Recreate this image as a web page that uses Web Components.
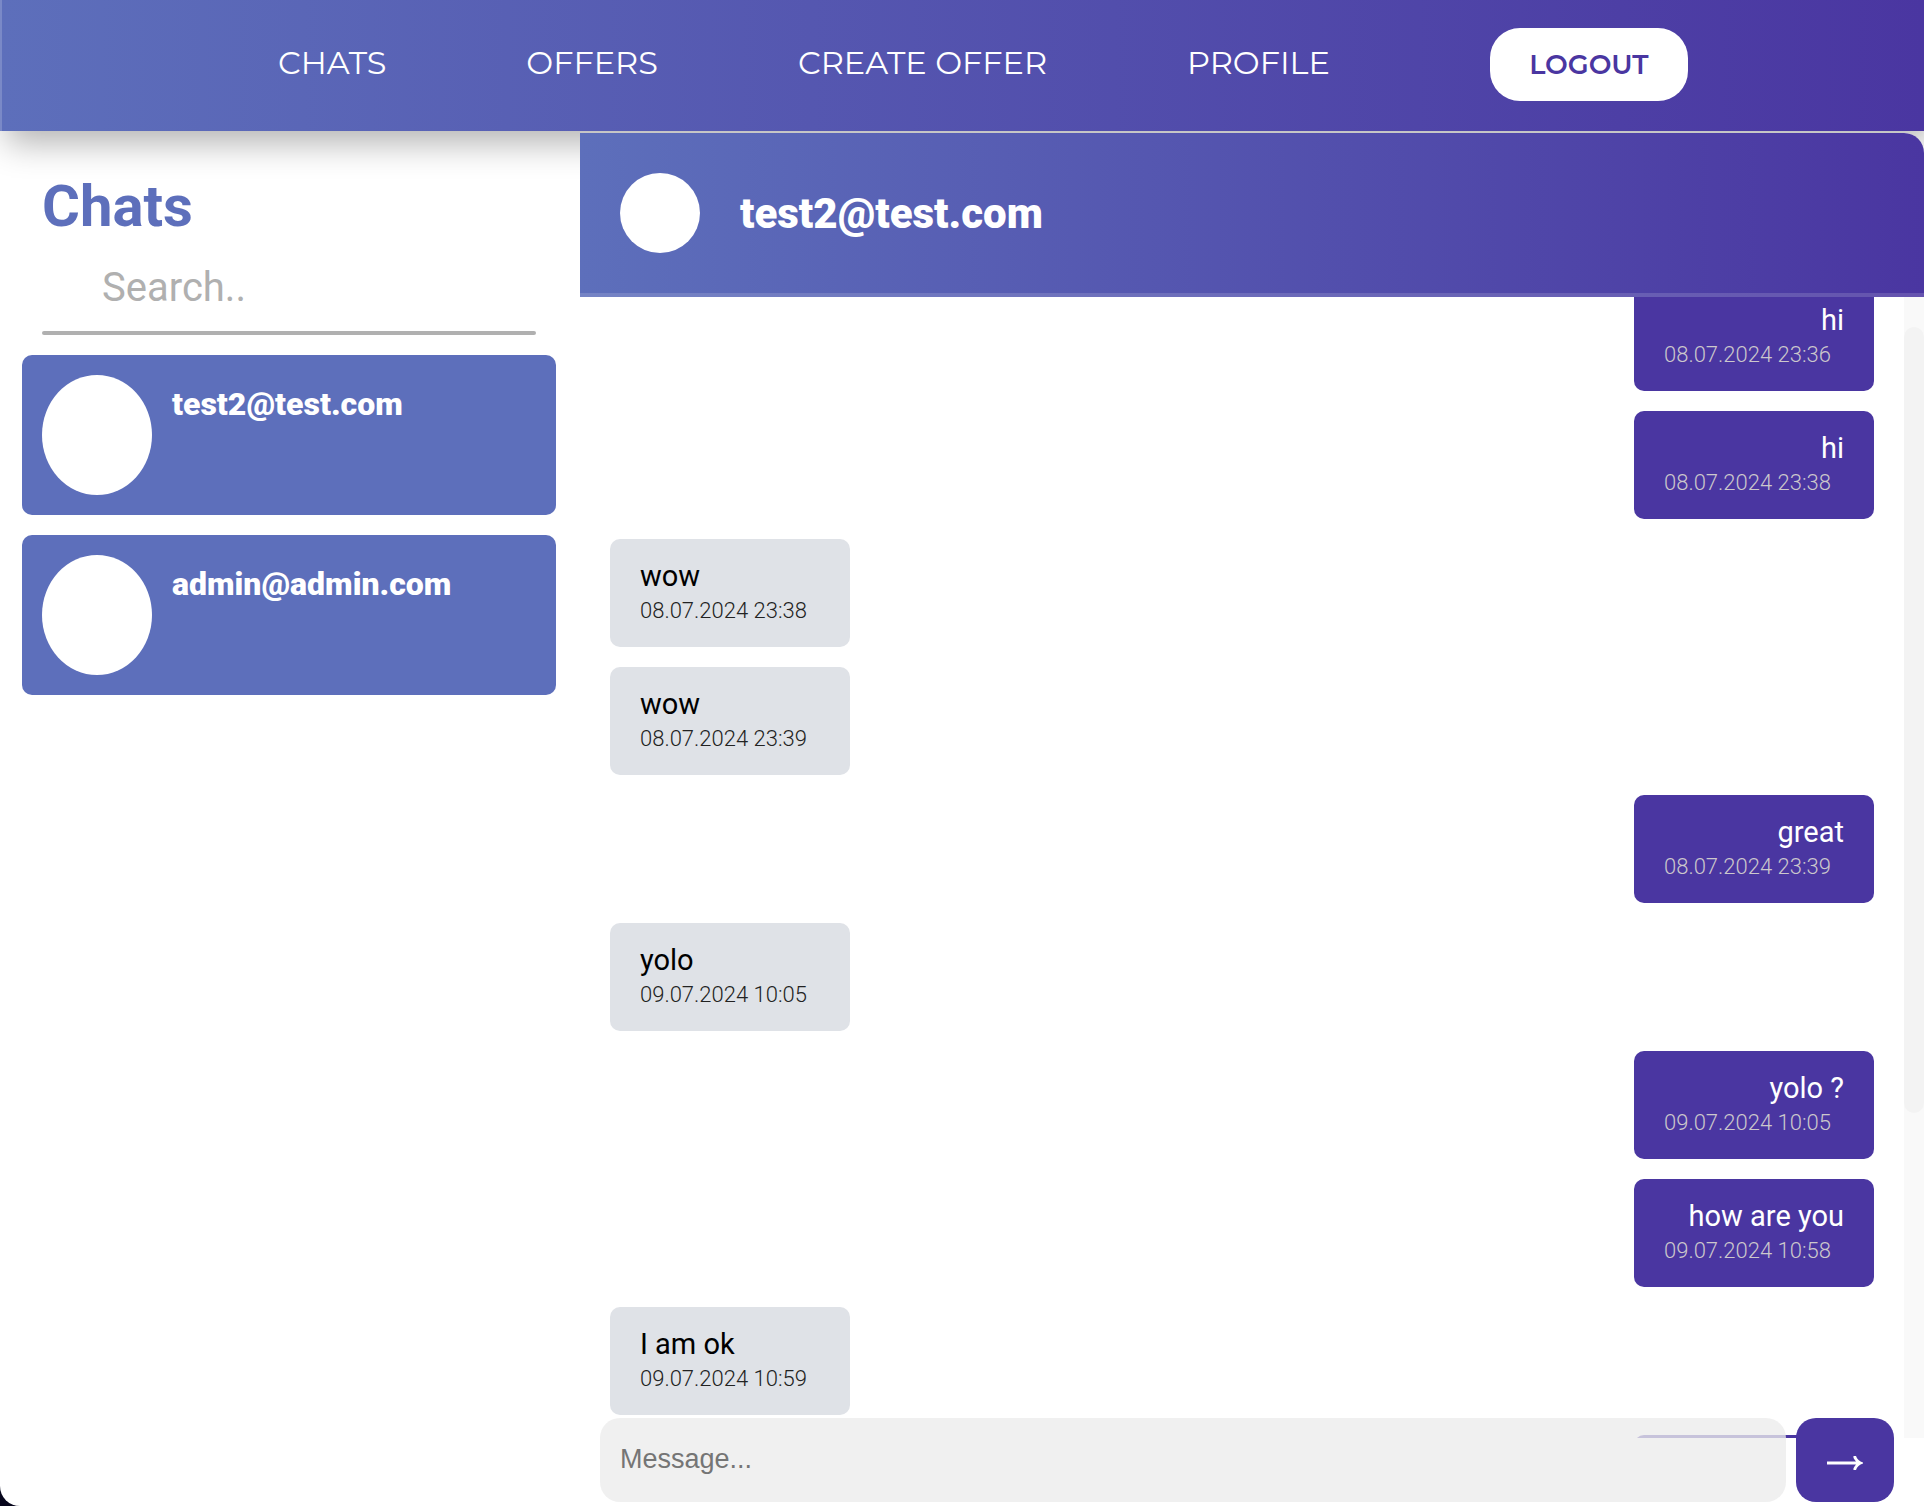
<!DOCTYPE html>
<html lang="en">
<head>
<meta charset="utf-8">
<title>Chats</title>
<style>
  html { background: #07061c; height: 100%; }
  body { margin: 0; height: 100%; font-family: Roboto, "Liberation Sans", sans-serif;
    --indigo: #4a36a1; --blue: #5d6fbb; --blend: linear-gradient(90deg, #5d6fbb, #4a36a1); }
</style>
</head>
<body>
<chat-app></chat-app>
<script>
const define = (name, html, setup) => customElements.define(name, class extends HTMLElement {
  connectedCallback() {
    if (this.shadowRoot) return;
    const t = document.createElement('template');
    t.innerHTML = '<style>*{box-sizing:border-box}</style>' + html;
    this.attachShadow({ mode: 'open' }).append(t.content.cloneNode(true));
    if (setup) setup(this, this.shadowRoot);
  }
});

define('user-avatar', `<style>
  :host { display: block; flex: none; width: 80px; height: 80px; border-radius: 50%; background: #fff; }
</style>`);

define('top-nav', `<style>
  :host { display: block; box-sizing: border-box; height: 131px; background: var(--blend) border-box;
    border-left: 2px solid rgba(255,255,255,.18); box-shadow: 6px 12px 32px rgba(0,0,0,.3); }
  nav { height: 100%; display: flex; align-items: center; justify-content: center; gap: 140px;
    padding: 0 0 2px 40px; font-family: Montserrat, Inter, sans-serif; }
  a { color: #fff; text-decoration: none; font-size: 32px; line-height: 40px; padding-bottom: 4px; white-space: nowrap; }
  button { margin-left: 20px; width: 198px; height: 73px; padding: 0; border: 0; border-radius: 30px; background: #fff;
    color: var(--indigo); font: 600 27px Montserrat, Inter, sans-serif; }
</style>
<nav aria-label="Main">
  <a href="#chats">CHATS</a><a href="#offers">OFFERS</a><a href="#create">CREATE OFFER</a><a href="#profile">PROFILE</a>
  <button type="button">LOGOUT</button>
</nav>`);

define('contact-card', `<style>
  :host { display: block; }
  a { display: flex; gap: 20px; height: 160px; padding: 20px; border-radius: 10px; background: var(--blue);
    color: #fff; text-decoration: none; font-size: 32px; font-weight: 900; line-height: 40px; }
  user-avatar { width: 110px; height: 120px; }
  span { padding-top: 9px; }
</style>
<a href="#chat"><user-avatar></user-avatar><span><slot></slot></span></a>`);

define('chat-sidebar', `<style>
  :host { display: block; padding: 40px 24px 0 22px; }
  header { padding: 0 20px; }
  h1 { margin: 0; color: var(--blue); font-size: 58px; line-height: 70px; font-weight: 700; }
  input { display: block; width: 100%; height: 90px; padding: 2px 60px 0; border: 0; outline: 0; background: none;
    font: 40px Roboto, sans-serif; color: #333; }
  input::placeholder { color: #b0b0b0; opacity: 1; }
  hr { margin: 0 0 20px; height: 4px; border: 0; border-radius: 2px; background: #b0b0b0; }
  section { display: flex; flex-direction: column; gap: 20px; }
</style>
<header><h1>Chats</h1><input type="search" aria-label="Search chats" placeholder="Search.."><hr></header>
<section><slot></slot></section>`);

define('chat-message', `<style>
  :host { display: block; flex: none; box-sizing: border-box; width: 240px; height: 108px; padding: 20px 30px 18px;
    border-radius: 10px; background: #dfe2e7; color: #000; }
  :host([own]) { align-self: flex-end; background: var(--indigo); color: #fff; }
  p { margin: 0; font-size: 29px; line-height: 34px; white-space: nowrap; }
  time { display: block; font-size: 22px; line-height: 36px; font-weight: 300; color: #222; white-space: nowrap; }
  :host([own]) p { text-align: right; }
  :host([own]) time { color: #ccc8cc; }
</style>
<p><slot></slot></p><time></time>`, (el, root) => { root.querySelector('time').textContent = el.getAttribute('time') || ''; });

define('message-list', `<style>
  :host { display: flex; min-height: 0; }
  .scroll { flex: 1; display: flex; flex-direction: column; gap: 20px; padding: 30px; overflow-y: scroll; scrollbar-width: none; }
  .track { width: 20px; background: #f9f9f9; display: grid; grid-template-rows: 30fr 786fr 325fr; }
  .thumb { grid-row: 2; border-radius: 10px; background: #f3f3f3; }
</style>
<div class="scroll"><slot></slot></div><div class="track" aria-hidden="true"><div class="thumb"></div></div>`,
(el, root) => { requestAnimationFrame(() => { root.querySelector('.scroll').scrollTop = 44; }); });

define('message-composer', `<style>
  :host { display: block; padding: 0 30px 4px 20px; margin-top: -20px; position: relative; }
  form { display: flex; gap: 10px; height: 84px; }
  input { flex: 1; min-width: 0; padding: 0 20px 2px; border: 0; outline: 0; border-radius: 20px;
    background: rgba(236,236,236,.775); font: 27px "Liberation Sans", Arial, sans-serif; color: #222; }
  input::placeholder { color: #757575; opacity: 1; }
  button { width: 98px; padding: 6px 0 0; border: 0; border-radius: 20px; background: var(--indigo); }
  svg { display: block; margin: auto; }
</style>
<form><input type="text" aria-label="Message" placeholder="Message..."><button type="button" aria-label="Send">
<svg width="38" height="16" viewBox="0 0 38 16"><path d="M1 6.500h29C28 4 27 2.500 27.500 1L30 1C31 4 33.500 6.500 37 7.500V8.500C33.500 9.500 31 12 30 15L27.500 15C27 13.500 28 12 30 9.500H1Z" fill="#fff"/></svg>
</button></form>`);

define('chat-panel', `<style>
  :host { display: flex; flex-direction: column; min-width: 0; min-height: 0; margin-top: 2px; position: relative;
    background: #fff; border-top-right-radius: 20px; }
  header { display: flex; align-items: center; gap: 40px; height: 164px; padding: 0 40px; background: var(--blend);
    border-bottom: 4px solid rgba(255,255,255,.15); border-top-right-radius: 20px; }
  h2 { margin: 0; padding-top: 2px; color: #fff; font-size: 42px; line-height: 52px; font-weight: 900; }
  message-list { flex: 1; }
</style>
<header><user-avatar></user-avatar><h2>test2@test.com</h2></header>
<message-list><slot></slot></message-list>
<message-composer></message-composer>`);

define('chat-app', `<style>
  :host { display: flex; flex-direction: column; height: 100vh; overflow: hidden; background: #fff; border-bottom-left-radius: 20px; }
  top-nav { flex: none; }
  main { flex: 1; min-height: 0; display: grid; grid-template-columns: 580px minmax(0, 1fr); }
</style>
<top-nav></top-nav>
<main>
  <chat-sidebar>
    <contact-card>test2@test.com</contact-card>
    <contact-card>admin@admin.com</contact-card>
  </chat-sidebar>
  <chat-panel>
    <chat-message own time="08.07.2024 23:36">hi</chat-message>
    <chat-message own time="08.07.2024 23:38">hi</chat-message>
    <chat-message time="08.07.2024 23:38">wow</chat-message>
    <chat-message time="08.07.2024 23:39">wow</chat-message>
    <chat-message own time="08.07.2024 23:39">great</chat-message>
    <chat-message time="09.07.2024 10:05">yolo</chat-message>
    <chat-message own time="09.07.2024 10:05">yolo ?</chat-message>
    <chat-message own time="09.07.2024 10:58">how are you</chat-message>
    <chat-message time="09.07.2024 10:59">I am ok</chat-message>
    <chat-message own></chat-message>
  </chat-panel>
</main>`);
</script>
</body>
</html>
